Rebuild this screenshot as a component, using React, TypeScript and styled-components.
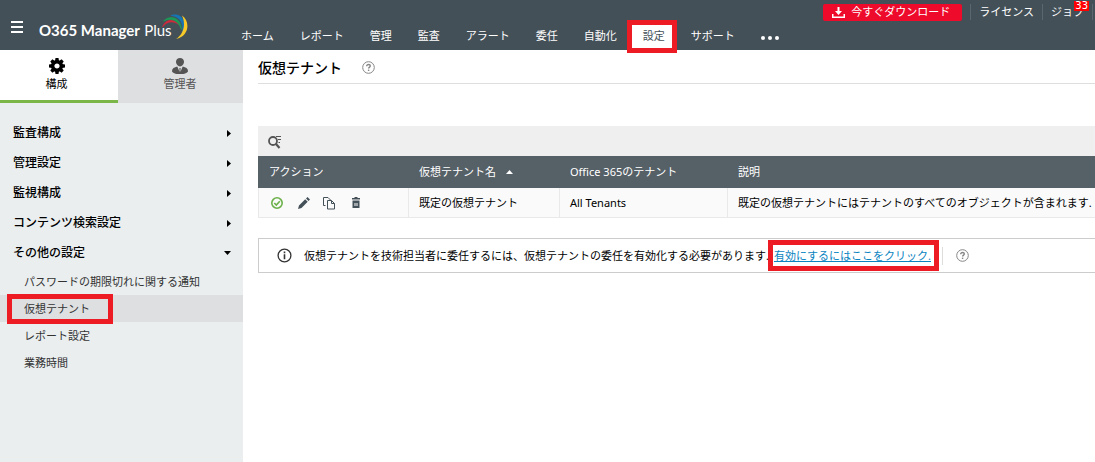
import React from "react";
import styled, { createGlobalStyle, css } from "styled-components";

const Global = createGlobalStyle`
  *, *::before, *::after { box-sizing: border-box; }
  body {
    margin: 0;
    background: #fff;
    color: #000;
    font-family: "Noto Sans", "Noto Sans CJK JP", sans-serif;
    font-size: 11px;
    line-height: 16px;
  }
  button { font: inherit; color: inherit; background: none; border: 0; padding: 0; cursor: pointer; }
  a { color: inherit; text-decoration: none; }
  ul { list-style: none; margin: 0; padding: 0; }
  svg { display: block; flex: none; }
`;

const marker = css`
  position: relative;
  &::after {
    content: "";
    position: absolute;
    border: 5px solid #ed1c24;
    pointer-events: none;
  }
`;

const Page = styled.div`
  min-height: 100vh;
  display: flex;
  flex-direction: column;
`;

const Header = styled.header`
  display: flex;
  height: 50px;
  background: #445058;
  color: #fff;
`;

const Brand = styled.div`
  display: flex;
  align-items: center;
  width: 228px;
  flex: none;
  padding: 4px 0 0 11px;
`;

const Logo = styled.a`
  display: flex;
  align-items: center;
  margin-left: 16px;
  font-family: Lato, sans-serif;
  font-size: 15px;
  line-height: 20px;
  font-weight: 700;
  white-space: pre;
  position: relative;
  padding-top: 5px;
  span { font-weight: 400; margin-left: 1px; }
  svg { position: absolute; right: -17px; top: -2px; }
`;

const HeaderBody = styled.div`
  flex: 1;
  min-width: 0;
  display: flex;
  flex-direction: column;
  justify-content: space-between;
`;

const Utility = styled.div`
  display: flex;
  justify-content: flex-end;
  align-items: center;
  height: 24px;
  padding-right: 2px;
`;

const Download = styled.button`
  display: flex;
  align-items: center;
  gap: 6px;
  height: 17px;
  padding: 0 12px 0 9px;
  margin-right: 8px;
  border-radius: 2px;
  background: #ee0a2b;
  color: #fff;
`;

const UtilityLink = styled.a`
  position: relative;
  padding: 0 8px;
  border-left: 1px solid #5b666d;
  &:last-child { border-right: 1px solid #5b666d; }
`;

const Badge = styled.span`
  position: absolute;
  top: -3px;
  right: 3px;
  padding: 0 1px;
  background: #f00;
  font-family: "DejaVu Sans", sans-serif;
  font-size: 10px;
  line-height: 10px;
`;

const Nav = styled.nav`
  display: flex;
  height: 26px;
`;

const NavLink = styled.a<{ $active?: boolean }>`
  display: flex;
  align-items: center;
  padding: 0 13px 2px;
  white-space: nowrap;
  ${(p) =>
    p.$active &&
    css`
      ${marker}
      background: linear-gradient(#fff, #fff) no-repeat 0 0 / calc(100% - 3px) 100%;
      color: #445058;
      &::after { inset: -4px 1px -3px -3px; }
    `}
`;

const More = styled.button`
  display: flex;
  align-items: center;
  padding: 2px 13px 0;
`;

const Body = styled.div`
  flex: 1;
  display: flex;
`;

const Sidebar = styled.aside`
  width: 243px;
  flex: none;
  background: #eaeeef;
`;

const Tabs = styled.div`
  display: flex;
  height: 53px;
`;

const Tab = styled.button<{ $active?: boolean }>`
  display: flex;
  flex-direction: column;
  align-items: center;
  gap: 2px;
  padding-top: 8px;
  width: ${(p) => (p.$active ? "118px" : "125px")};
  padding-right: ${(p) => (p.$active ? "5px" : "1px")};
  background: ${(p) => (p.$active ? "#fff" : "#dedfe1")};
  color: ${(p) => (p.$active ? "#000" : "#555")};
  border-bottom: ${(p) => (p.$active ? "3px solid #7ab648" : "0")};
`;

const Menu = styled.ul`
  padding-top: 15px;
`;

const Group = styled.button`
  display: flex;
  align-items: center;
  justify-content: space-between;
  width: 100%;
  height: 30px;
  padding: 0 12px 0 13px;
  font-size: 12px;
  font-weight: 500;
`;

const SubLink = styled.a<{ $active?: boolean }>`
  display: flex;
  align-items: center;
  height: 27px;
  padding-left: 24px;
  color: #333;
  ${(p) =>
    p.$active &&
    css`
      ${marker}
      background: #dedfe1;
      &::after { left: 7px; top: -1px; bottom: -2px; width: 106px; }
    `}
`;

const Main = styled.main`
  flex: 1;
  min-width: 0;
  padding-left: 15px;
`;

const TitleBar = styled.div`
  display: flex;
  align-items: center;
  gap: 20px;
  height: 34px;
  padding-top: 2px;
  border-bottom: 1px solid #dedede;
  margin-bottom: 42px;
`;

const Title = styled.h1`
  margin: 0;
  font-size: 14px;
  line-height: 20px;
  font-weight: 500;
`;

const Toolbar = styled.div`
  display: flex;
  align-items: center;
  height: 30px;
  padding: 2px 0 0 10px;
  background: #efefef;
`;

const Table = styled.table`
  width: 100%;
  table-layout: fixed;
  border-spacing: 0;
  white-space: nowrap;
`;

const Th = styled.th<{ $width?: number }>`
  width: ${(p) => (p.$width ? `${p.$width}px` : "auto")};
  height: 32px;
  padding: 0 0 0 11px;
  background: #566067;
  color: #fff;
  font-weight: 400;
  text-align: left;
`;

const SortButton = styled.button`
  display: flex;
  align-items: center;
  gap: 10px;
`;

const Td = styled.td`
  height: 30px;
  padding: 0 0 0 10px;
  background: #fafafa;
  border-left: 1px solid #e9e9e9;
  border-bottom: 1px solid #e9e9e9;
`;

const Actions = styled.div`
  display: flex;
  align-items: center;
  gap: 12px;
`;

const Notice = styled.div`
  display: flex;
  align-items: center;
  height: 35px;
  margin-top: 20px;
  padding-left: 18px;
  border: 1px solid #ccc;
  border-right: 0;
  white-space: nowrap;
`;

const NoticeText = styled.p`
  margin: 0 0 0 12px;
`;

const NoticeLink = styled.a`
  ${marker}
  margin-left: 5px;
  color: #0a84c1;
  text-decoration: underline;
  &::after { inset: -8px -8px -8px -6px; }
`;

const NoticeHelp = styled.div`
  display: flex;
  align-items: center;
  height: 18px;
  margin-left: 11px;
  padding-left: 13px;
  border-left: 1px solid #ddd;
`;

const Help = () => (
  <button aria-label="ヘルプ">
    <svg width="13" height="13" viewBox="0 0 13 13" fill="none" stroke="#858585">
      <circle cx="6.5" cy="6.5" r="5.8" />
      <path d="M4.7 5.2c0-1.1.8-1.7 1.8-1.7s1.8.6 1.8 1.5c0 1.1-1.7 1.2-1.7 2.6" strokeWidth="1.4" />
      <path d="M5.9 9.3h1.4" strokeWidth="1.4" />
    </svg>
  </button>
);

const Arrow = ({ dir }: { dir: "right" | "down" | "up" }) =>
  dir === "right" ? (
    <svg width="4" height="7" viewBox="0 0 4 7"><path d="M0 0l4 3.5L0 7z" fill="currentColor" /></svg>
  ) : (
    <svg width="7" height="4" viewBox="0 0 7 4">
      <path d={dir === "up" ? "M0 4l3.5-4L7 4z" : "M0 0l3.5 4L7 0z"} fill="currentColor" />
    </svg>
  );

const Gear = () => (
  <svg width="16" height="16" viewBox="-8 -8 16 16">
    <circle r="4.3" fill="none" stroke="#000" strokeWidth="3.4" />
    {[0, 45, 90, 135, 180, 225, 270, 315].map((a) => (
      <path key={a} d="M-2-5l.5-3h3l.5 3z" transform={`rotate(${a})`} />
    ))}
  </svg>
);

const Person = () => (
  <svg width="16" height="16" viewBox="0 0 16 16" fill="#555">
    <path d="M8 0c2.300 0 4 1.500 4 3.800S10 8.400 8 8.400 4 6.100 4 3.800 5.700 0 8 0z" />
    <path d="M5.300 8.600L7.600 14l-.2-4h1.200l-.2 4 2.300-5.400c3 .7 5.300 2 5.300 4.300 0 2-3.500 3.100-8 3.100s-8-1.100-8-3.100c0-2.300 2.300-3.600 5.300-4.300z" />
  </svg>
);

const nav = ["ホーム", "レポート", "管理", "監査", "アラート", "委任", "自動化", "設定", "サポート"];
const groups = ["監査構成", "管理設定", "監視構成", "コンテンツ検索設定"];
const links = ["パスワードの期限切れに関する通知", "仮想テナント", "レポート設定", "業務時間"];

export default function App() {
  return (
    <Page>
      <Global />
      <Header>
        <Brand>
          <button aria-label="メニュー">
            <svg width="12" height="12" viewBox="0 0 12 12" fill="#fff">
              <path d="M0 0h12v2H0zM0 5h12v2H0zM0 10h12v2H0z" />
            </svg>
          </button>
          <Logo href="#">
            O365 Manager <span>Plus</span>
            <svg width="28" height="28" viewBox="0 0 28 28" fill="none">
              <path d="M1.500 14C4 6 13 5 18 11.500C12 7.500 6 8 1.500 14z" fill="#d2283c" stroke="#d2283c" strokeWidth=".6" />
              <path d="M2.500 8C9 1.500 20 4 20.500 16.500C17 7 10 4.500 2.500 8z" fill="#1c9a58" stroke="#1c9a58" strokeWidth=".6" />
              <path d="M10 2.500C20-1 27 9 21.500 20.500C23 10 19 3.500 10 2.500z" fill="#1576b5" stroke="#1576b5" strokeWidth=".6" />
              <path d="M21 2.500c8 5 8 20.500-6 23.500 8-5 10-15 6-23.500z" fill="#f6c928" />
            </svg>
          </Logo>
        </Brand>
        <HeaderBody>
          <Utility>
            <Download>
              <svg width="13" height="11" viewBox="0 0 13 11" fill="#fff">
                <path d="M5.500 0h2v4H10L6.500 8 3 4h2.500zM0 7h1.500v2.500h10V7H13v4H0z" />
              </svg>
              今すぐダウンロード
            </Download>
            <UtilityLink href="#">ライセンス</UtilityLink>
            <UtilityLink href="#">ジョブ<Badge>33</Badge></UtilityLink>
          </Utility>
          <Nav>
            {nav.map((n) => (
              <NavLink key={n} href="#" $active={n === "設定"}>{n}</NavLink>
            ))}
            <More aria-label="その他">
              <svg width="18" height="4" viewBox="0 0 18 4" fill="#fff">
                <circle cx="2" cy="2" r="2" /><circle cx="9" cy="2" r="2" /><circle cx="16" cy="2" r="2" />
              </svg>
            </More>
          </Nav>
        </HeaderBody>
      </Header>
      <Body>
        <Sidebar>
          <Tabs>
            <Tab $active><Gear />構成</Tab>
            <Tab><Person />管理者</Tab>
          </Tabs>
          <Menu>
            {groups.map((g) => (
              <li key={g}><Group>{g}<Arrow dir="right" /></Group></li>
            ))}
            <li>
              <Group>その他の設定<Arrow dir="down" /></Group>
              <ul>
                {links.map((l) => (
                  <li key={l}><SubLink href="#" $active={l === "仮想テナント"}>{l}</SubLink></li>
                ))}
              </ul>
            </li>
          </Menu>
        </Sidebar>
        <Main>
          <TitleBar><Title>仮想テナント</Title><Help /></TitleBar>
          <Toolbar>
            <button aria-label="検索">
              <svg width="15" height="14" viewBox="0 0 15 14" fill="none" stroke="#555">
                <circle cx="5" cy="6" r="4" strokeWidth="1.800" />
                <path d="M8 9l3.500 4" strokeWidth="2.200" />
                <path d="M8 1.500h5M10 4.500h3M10.500 7.500H12" />
              </svg>
            </button>
          </Toolbar>
          <Table>
            <thead>
              <tr>
                <Th $width={150}>アクション</Th>
                <Th $width={151}><SortButton>仮想テナント名<Arrow dir="up" /></SortButton></Th>
                <Th $width={168}>Office 365のテナント</Th>
                <Th>説明</Th>
              </tr>
            </thead>
            <tbody>
              <tr>
                <Td>
                  <Actions>
                    <button aria-label="有効">
                      <svg width="16" height="14" viewBox="0 0 16 14" fill="none" stroke="#6bb04a" strokeWidth="1.600">
                        <circle cx="8" cy="7" r="5.200" /><path d="M5.300 7l2 2 3.500-3.800" />
                      </svg>
                    </button>
                    <button aria-label="編集">
                      <svg width="13" height="12" viewBox="0 0 13 12" fill="#445058">
                        <path d="M1 12l1-3.500L8.200 2.300l2.500 2.500L4.500 11zM9 1.500L10.500 0 13 2.500 11.500 4z" />
                      </svg>
                    </button>
                    <button aria-label="コピー">
                      <svg width="14" height="14" viewBox="0 0 14 14" fill="none" stroke="#445058">
                        <path d="M3.500 9.500h-2v-8h4.500L8.500 4M5.500 4.500h4l3 3v5.500h-7zM9.500 4.500v3h3" />
                      </svg>
                    </button>
                    <button aria-label="削除">
                      <svg width="16" height="12" viewBox="0 0 16 12" fill="#445058">
                        <path d="M4 1h2.500V0h3v1H12v1.500H4z" />
                        <path fillRule="evenodd" d="M4.500 3.500h7V11h-7zM6.500 6v3h1V6zm2 0v3h1V6z" />
                      </svg>
                    </button>
                  </Actions>
                </Td>
                <Td>既定の仮想テナント</Td>
                <Td>All Tenants</Td>
                <Td>既定の仮想テナントにはテナントのすべてのオブジェクトが含まれます.</Td>
              </tr>
            </tbody>
          </Table>
          <Notice>
            <svg width="15" height="15" viewBox="0 0 15 15" fill="none" stroke="#333">
              <circle cx="7.500" cy="7.500" r="6.400" strokeWidth="1.300" />
              <path d="M7.500 3.500v1.700M7.500 6.300v5" strokeWidth="1.600" />
            </svg>
            <NoticeText>
              仮想テナントを技術担当者に委任するには、仮想テナントの委任を有効化する必要があります.
              <NoticeLink href="#">有効にするにはここをクリック.</NoticeLink>
            </NoticeText>
            <NoticeHelp><Help /></NoticeHelp>
          </Notice>
        </Main>
      </Body>
    </Page>
  );
}
